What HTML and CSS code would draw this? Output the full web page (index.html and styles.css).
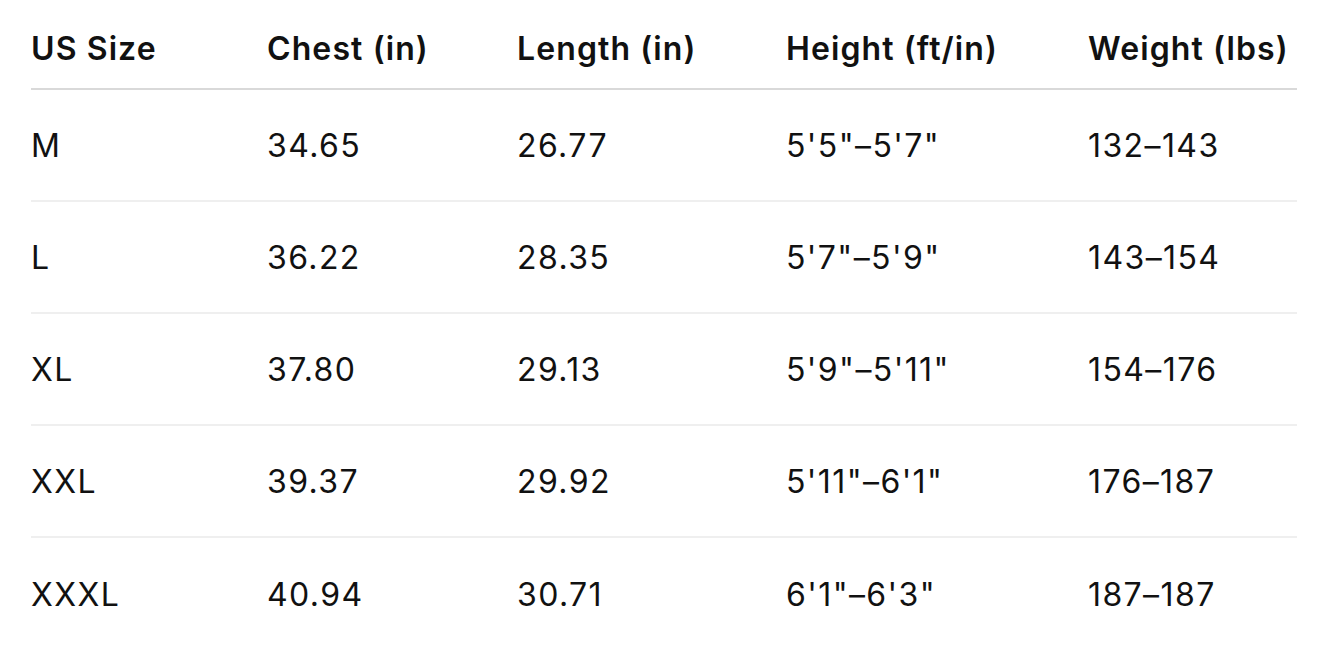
FILE: index.html
```html
<!DOCTYPE html>
<html lang="en">
<head>
<meta charset="utf-8">
<title>Size chart</title>
<link rel="stylesheet" href="styles.css">
</head>
<body>
<div class="chart">
  <div class="row head">
    <div>US Size</div><div>Chest (in)</div><div>Length (in)</div><div>Height (ft/in)</div><div>Weight (lbs)</div>
  </div>
  <div class="row">
    <div>M</div><div>34.65</div><div>26.77</div><div>5'5"–5'7"</div><div>132–143</div>
  </div>
  <div class="row">
    <div>L</div><div>36.22</div><div>28.35</div><div>5'7"–5'9"</div><div>143–154</div>
  </div>
  <div class="row">
    <div>XL</div><div>37.80</div><div>29.13</div><div>5'9"–5'11"</div><div>154–176</div>
  </div>
  <div class="row">
    <div>XXL</div><div>39.37</div><div>29.92</div><div>5'11"–6'1"</div><div>176–187</div>
  </div>
  <div class="row">
    <div>XXXL</div><div>40.94</div><div>30.71</div><div>6'1"–6'3"</div><div>187–187</div>
  </div>
</div>
</body>
</html>
```

FILE: styles.css
```css
html, body {
  margin: 0;
  padding: 0;
  background: #ffffff;
}
body {
  font-family: Inter, "Liberation Sans", sans-serif;
  color: #111111;
  padding: 10px 31px 0 31px;
}
.chart {
  width: 1266px;
}
.row {
  display: grid;
  grid-template-columns: 236px 250px 269px 302px 1fr;
  align-items: center;
  height: 112px;
  box-sizing: border-box;
  border-bottom: 2px solid #efefef;
  font-size: 32px;
  font-weight: 400;
  letter-spacing: 1.4px;
}
.row > div {
  white-space: nowrap;
}
.row.head {
  height: 80px;
  border-bottom: 2px solid #d9d9d9;
  font-weight: 600;
  letter-spacing: 1.1px;
  padding-bottom: 2px;
}
.row:last-child {
  border-bottom: none;
}
```
